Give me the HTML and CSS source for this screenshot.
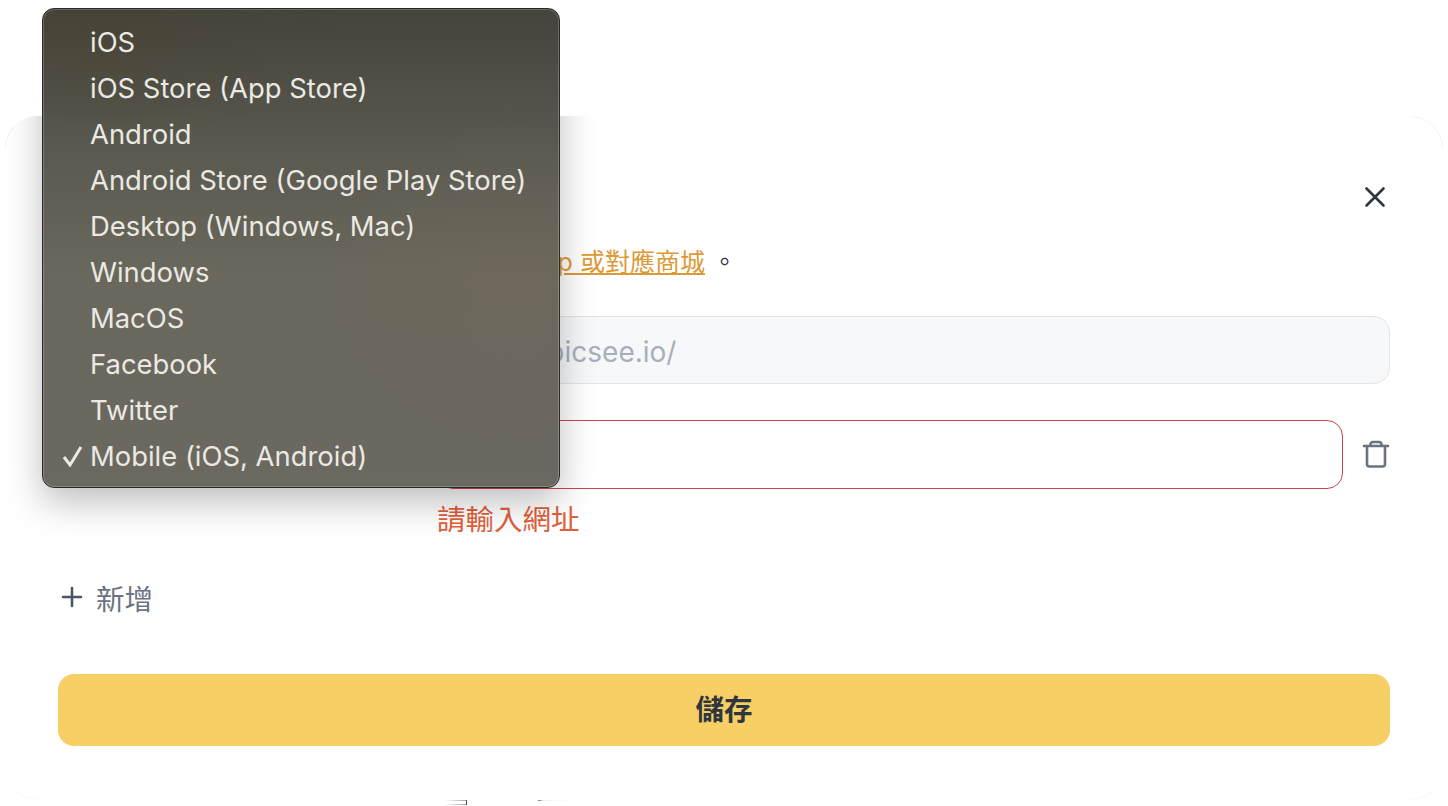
FILE: index.html
```html
<!DOCTYPE html>
<html lang="zh-Hant">
<head>
  <meta charset="UTF-8">
  <title>裝置連結</title>
  <link rel="stylesheet" href="styles.css">
</head>
<body>

<div class="page">
  <div class="modal">
    <div class="menu-shadow"></div>

    <div class="modal-head">
      <button class="icon-btn" aria-label="關閉">
        <svg width="24" height="24" viewBox="0 0 24 24" fill="none" stroke="#2f3640" stroke-width="2.6" stroke-linecap="round"><path d="M3.500 3.500l17 17M20.500 3.500l-17 17"/></svg>
      </button>
    </div>

    <p class="desc">前往 <a href="#store">App 或對應商城</a> 。</p>

    <div class="row">
      <div class="type-cell"></div>
      <input class="url-input url-default" type="text" value="https://picsee.io/" disabled>
    </div>

    <div class="row row-device">
      <div class="type-cell"></div>
      <input class="url-input url-error" type="text">
      <button class="icon-btn trash-btn" aria-label="刪除">
        <svg width="28" height="28" viewBox="0 0 28 28" fill="none" stroke="#6b7280" stroke-width="2.600" stroke-linecap="round" stroke-linejoin="round"><path d="M2 6h24M8.500 6V4.500C8.500 3 9.500 2 11 2h6c1.500 0 2.500 1 2.500 2.500V6M5 6v18c0 1.500 1 2.500 2.500 2.500h13c1.500 0 2.500-1 2.500-2.500V6"/></svg>
      </button>
    </div>
    <div class="error-msg">請輸入網址</div>

    <button class="add-btn">
      <svg width="24" height="24" viewBox="0 0 24 24" fill="none" stroke="#4b5563" stroke-width="2.600" stroke-linecap="round"><path d="M12 3v18M3 12h18"/></svg>
      <span>新增</span>
    </button>

    <button class="save-btn">儲存</button>

    <i class="corner corner-tl"></i>
    <i class="corner corner-tr"></i>
    <i class="corner corner-bl"></i>
    <i class="corner corner-br"></i>
  </div>

  <i class="sliver sliver-a"></i>
  <i class="sliver sliver-b"></i>

  <ul class="menu">
    <li>iOS</li>
    <li>iOS Store (App Store)</li>
    <li>Android</li>
    <li>Android Store (Google Play Store)</li>
    <li>Desktop (Windows, Mac)</li>
    <li>Windows</li>
    <li>MacOS</li>
    <li>Facebook</li>
    <li>Twitter</li>
    <li class="checked">
      <svg class="check" width="22" height="22" viewBox="0 0 22 22" fill="none" stroke="#ebe9e4" stroke-width="3"><path d="M2 12l6 8L19 2"/></svg>
      Mobile (iOS, Android)
    </li>
  </ul>
</div>

</body>
</html>
```

FILE: styles.css
```css
* {
  box-sizing: border-box;
}
body {
  margin: 0;
  background-color: #fff;
  font-family: Inter, "Noto Sans CJK TC", sans-serif;
  color: #2f3640;
}
.page {
  position: relative;
  width: 1448px;
  height: 806px;
  padding: 116px 5px 6px;
  overflow: hidden;
}
.modal {
  position: relative;
  height: 684px;
  padding: 69px 53px 0;
  background-color: #fff;
  border-radius: 32px;
  overflow: hidden;
}
.menu-shadow {
  position: absolute;
  left: 37px;
  top: -108px;
  width: 518px;
  height: 480px;
  border-radius: 12px;
  box-shadow: 0 14px 36px rgba(0,0,0,0.26);
}
.modal-head {
  display: flex;
  justify-content: flex-end;
  height: 24px;
}
.icon-btn {
  padding: 0;
  border: none;
  background: none;
  display: flex;
  align-items: center;
  justify-content: center;
}
.modal-head .icon-btn {
  margin-right: 3px;
}
.desc {
  margin: 35px 0 36px;
  padding-left: 410px;
  font-size: 25px;
  line-height: 36px;
}
.desc a {
  color: #dc9a36;
}
.row {
  display: flex;
  gap: 16px;
  height: 68px;
}
.row-device {
  margin-top: 36px;
  height: 69px;
}
.type-cell {
  flex: none;
  width: 363px;
}
.url-input {
  flex: 1;
  min-width: 0;
  padding: 3px 15px 0;
  border-radius: 16px;
  font-family: inherit;
  font-size: 28px;
  outline: none;
}
.url-default {
  background-color: #f7f8fa;
  border: 1px solid #e2e5ea;
  color: #a9afba;
}
.url-error {
  background-color: #fff;
  border: 1px solid #d0434f;
}
.trash-btn {
  flex: none;
  width: 31px;
  padding: 0 0 2px 2px;
}
.error-msg {
  margin: 11px 0 0 379px;
  font-size: 28.500px;
  line-height: 40px;
  color: #e0603a;
}
.add-btn {
  display: flex;
  align-items: center;
  gap: 12px;
  margin: 37px 0 0 2px;
  padding: 0;
  height: 40px;
  border: none;
  background: none;
  font-family: inherit;
  font-size: 28.500px;
  color: #6b7280;
}
.save-btn {
  display: block;
  width: 100%;
  height: 72px;
  margin-top: 57px;
  padding: 0 0 6px;
  border: none;
  border-radius: 16px;
  background-color: #f8cf64;
  font-family: inherit;
  font-size: 28.500px;
  font-weight: 700;
  color: #2f3640;
}
.corner {
  position: absolute;
  width: 32px;
  height: 32px;
  border: 1px solid transparent;
}
.corner-tl {
  left: 0;
  top: 0;
  border-left-color: rgba(0,0,0,0.06);
  border-top-left-radius: 32px;
}
.corner-tr {
  right: 0;
  top: 0;
  border-top-color: rgba(0,0,0,0.05);
  border-right-color: rgba(0,0,0,0.05);
  border-top-right-radius: 32px;
}
.corner-bl {
  left: 0;
  bottom: 0;
  border-bottom-color: rgba(0,0,0,0.04);
  border-bottom-left-radius: 32px;
}
.corner-br {
  right: 0;
  bottom: 0;
  border-bottom-color: rgba(0,0,0,0.05);
  border-bottom-right-radius: 32px;
}
.sliver {
  position: absolute;
  top: 800px;
}
.sliver-a {
  left: 445px;
  width: 22px;
  height: 5px;
  background: linear-gradient(to right, transparent, rgba(90,70,80,0.5));
  border-right: 1px solid #5a4650;
}
.sliver-a::after {
  content: "";
  display: block;
  margin-top: 1px;
  height: 3px;
  background-color: #fff;
}
.sliver-b {
  left: 538px;
  width: 37px;
  height: 1px;
  background: linear-gradient(to right, #6a6a6a, rgba(0,0,0,0.05) 15%, transparent);
}
.menu {
  position: absolute;
  left: 42px;
  top: 8px;
  width: 518px;
  height: 480px;
  margin: 0;
  padding: 10px 0;
  list-style: none;
  border: 1px solid #2a2925;
  border-radius: 12px;
  background:
    radial-gradient(ellipse 180px 160px at 470px 270px, rgba(125,108,90,0.22), transparent),
    radial-gradient(ellipse 240px 110px at 60px 20px, rgba(75,65,45,0.4), transparent),
    linear-gradient(to bottom, #44433c 0%, #5b5a50 30%, #6a675c 55%, #6b6860 100%);
  box-shadow: inset 0 0 0 1px rgba(255,255,255,0.2);
  color: #ebe9e4;
  font-size: 27.400px;
}
.menu li {
  position: relative;
  height: 46px;
  padding-left: 47px;
  line-height: 46px;
  white-space: nowrap;
}
.check {
  position: absolute;
  left: 19px;
  top: 12px;
}
```
